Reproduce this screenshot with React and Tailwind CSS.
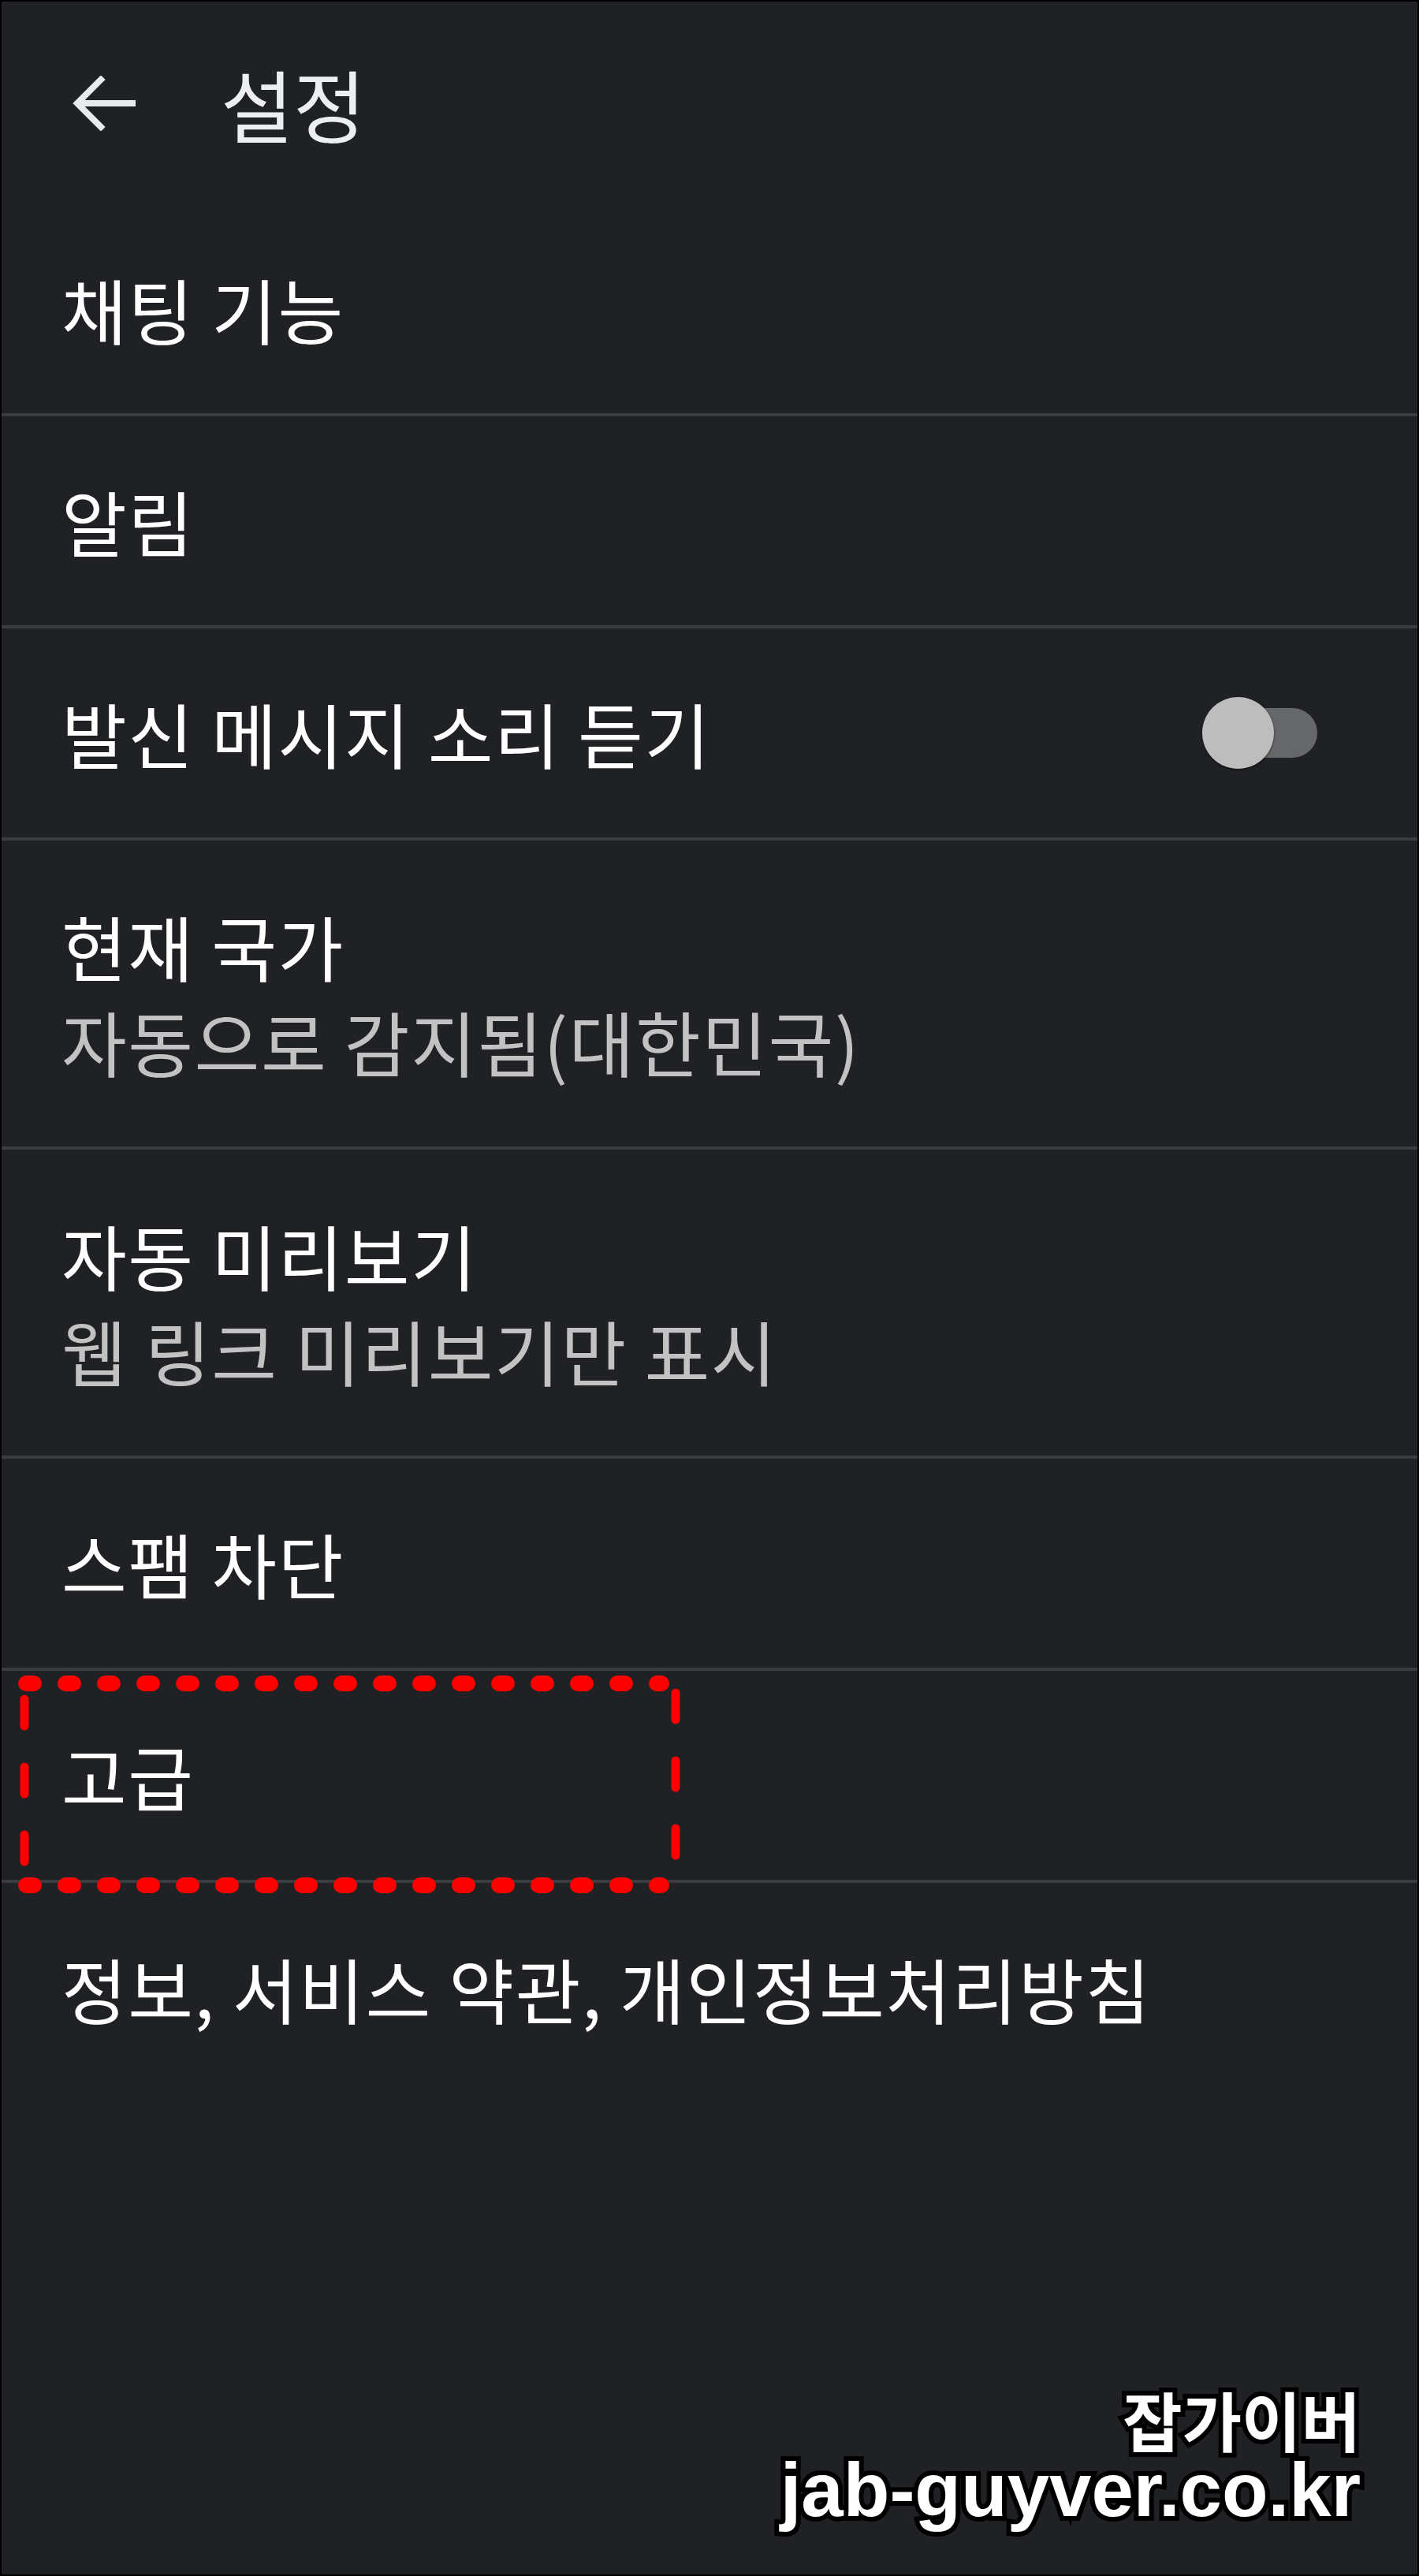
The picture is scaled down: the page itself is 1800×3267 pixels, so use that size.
import React from 'react';

const rows = [
    { title: '채팅 기능' },
    { title: '알림' },
    { title: '발신 메시지 소리 듣기', toggle: true },
    { title: '현재 국가', sub: '자동으로 감지됨(대한민국)' },
    { title: '자동 미리보기', sub: '웹 링크 미리보기만 표시' },
    { title: '스팸 차단' },
    { title: '고급', marked: true },
];

const Toggle = () => (
    <div className="relative w-[146px] h-[92px] flex items-center">
        <div className="absolute right-0 w-[112px] h-[63px] rounded-full bg-[#666769]" />
        <div className="absolute left-0 w-[91px] h-[91px] rounded-full bg-[#bdbdbd] shadow-[0_1px_3px_rgba(0,0,0,0.6)]" />
    </div>
);

const RedMark = () => (
    <svg className="absolute left-[17px] top-[2px]" width="848" height="284" viewBox="0 0 848 284">
        <g stroke="#ff0000" strokeLinecap="round" fill="none">
            <line x1="14" y1="14" x2="820" y2="14" strokeWidth="20" strokeDasharray="10 40" />
            <line x1="14" y1="270" x2="820" y2="270" strokeWidth="20" strokeDasharray="10 40" />
            <line x1="12" y1="34" x2="12" y2="262" strokeWidth="11" strokeDasharray="34 52" />
            <line x1="838" y1="26" x2="838" y2="274" strokeWidth="11" strokeDasharray="34 52" />
        </g>
    </svg>
);

const App = () => {
    return (
        <div className="relative w-[1800px] h-[3267px] bg-[#202124] border-2 border-black overflow-hidden font-['Noto_Sans_CJK_KR',sans-serif] text-white">
            {/* header */}
            <div className="h-[257px] flex items-center pl-[90px]">
                <svg width="80" height="70" viewBox="0 0 80 70" className="text-[#e8eaed]">
                    <path d="M76 35 H8 M36 5 L6 35 L36 65" stroke="currentColor" strokeWidth="8" fill="none" strokeLinecap="square" />
                </svg>
                <h1 className="ml-[108px] text-[100px] leading-none text-[#eceef1]">설정</h1>
            </div>

            {rows.map((r, i) => (
                <div
                    key={i}
                    className={`relative flex items-center justify-between pl-[76px] pr-[127px] border-b-4 border-[#3b3c3f] ${r.sub ? 'h-[392px]' : 'h-[269px]'}`}
                >
                    <div className="flex flex-col">
                        <span className="text-[90px] leading-[121px] tracking-[1.5px]">{r.title}</span>
                        {r.sub && <span className="text-[90px] leading-[121px] tracking-[1.5px] text-[#c2c2c2]">{r.sub}</span>}
                    </div>
                    {r.toggle && <Toggle />}
                    {r.marked && <RedMark />}
                </div>
            ))}

            <div className="h-[266px] flex items-center pl-[76px]">
                <span className="text-[90px] leading-[121px] tracking-[1.5px]">정보, 서비스 약관, 개인정보처리방침</span>
            </div>

            {/* watermark */}
            <div className="absolute right-[72px] top-[3022px] flex flex-col items-end gap-[4px]">
                <span className="text-[82px] leading-[88px] font-bold text-white [-webkit-text-stroke:12px_black] [paint-order:stroke_fill]">잡가이버</span>
                <span className="font-['Liberation_Sans',sans-serif] text-[96px] leading-[84px] font-bold text-white [-webkit-text-stroke:12px_black] [paint-order:stroke_fill]">jab-guyver.co.kr</span>
            </div>
        </div>
    );
};

export default App;
